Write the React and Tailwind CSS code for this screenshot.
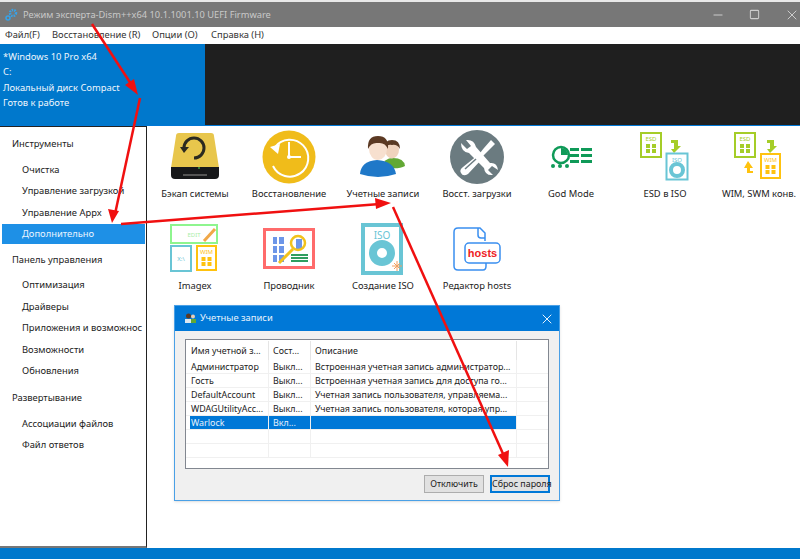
import { Minus, Square, X } from 'lucide-react';

const font = { fontFamily: '"Noto Sans", sans-serif' };

function Backup() {
  return (
    <svg width="50" height="50" viewBox="0 0 50 50">
      <path d="M6 4 Q6 1 9 1 H41 Q44 1 44 4 L49 36 H1 Z" fill="#e8c64c" />
      <path d="M1 35 H49 V43 Q49 47 45 47 H5 Q1 47 1 43 Z" fill="#17181a" />
      <rect x="13" y="42" width="24" height="2" fill="#555" />
      <circle cx="29" cy="36" r="1" fill="#3fa142" />
      <path d="M14 16 A10 10 0 1 1 24 26" fill="none" stroke="#2b2a20" strokeWidth="3" />
      <path d="M10 15 L19 15 L14 21 Z" fill="#2b2a20" />
    </svg>
  );
}

function Restore() {
  return (
    <svg width="54" height="54" viewBox="0 0 54 54">
      <circle cx="27" cy="27" r="26.5" fill="#f0bc1a" />
      <path d="M13 17 A18.5 18.5 0 1 1 11 36" fill="none" stroke="#fff" strokeWidth="2" />
      <path d="M8 17 L18 14 L16 24 Z" fill="#fff" />
      <path d="M27 12 V27 H39" fill="none" stroke="#fff" strokeWidth="2" />
      <circle cx="27" cy="27" r="2" fill="#fff" />
    </svg>
  );
}

function Users() {
  return (
    <svg width="46" height="42" viewBox="0 0 46 42">
      <path d="M22 31 Q24 22 33 22 Q44 22 45 30 Q38 34 22 31 Z" fill="#62a834" />
      <ellipse cx="32" cy="14" rx="7" ry="8.5" fill="#f0d3bd" />
      <path d="M24 13 Q24 4 32 4 Q40 4 40 13 Q37 8 32 9 Q27 8 24 13 Z" fill="#5a3a24" />
      <path d="M0 38 Q1 25 17 24 Q34 25 36 38 Q18 44 0 38 Z" fill="#1f78c8" />
      <ellipse cx="18" cy="13" rx="9" ry="11" fill="#f7e0cf" />
      <path d="M8 13 Q7 0 18 0 Q29 0 28 13 Q25 6 18 7 Q11 6 8 13 Z" fill="#5b3923" />
    </svg>
  );
}

function Tools() {
  return (
    <svg width="54" height="54" viewBox="0 0 54 54">
      <circle cx="27" cy="27" r="27" fill="#6b7b80" />
      <path d="M11 13 L17 19 L21 16 L16 10 Q24 9 26 17 L40 33 Q47 32 48 40 L42 36 L38 40 L43 45 Q35 46 34 38 L19 23 Q11 22 11 13 Z" fill="#fff" />
      <path d="M41 10 L45 14 L37 22 L33 26 L30 23 L34 18 Z" fill="#fff" />
      <path d="M28 25 L32 29 L18 44 Q13 47 11 43 Q9 40 13 37 Z" fill="#fff" />
      <path d="M15 39 L26 29" stroke="#6b7b80" strokeWidth="1.5" />
    </svg>
  );
}

function GodMode() {
  return (
    <svg width="44" height="24" viewBox="0 0 44 24">
      <circle cx="12" cy="10" r="8" fill="none" stroke="#0f9a58" strokeWidth="2.5" />
      <path d="M12 3 A7 7 0 0 1 19 10 H12 Z" fill="#0f9a58" />
      <g fill="#0f9a58">
        <rect x="21" y="3" width="9" height="3" /><rect x="32" y="3" width="11" height="3" />
        <rect x="21" y="9" width="9" height="3" /><rect x="32" y="9" width="11" height="3" />
        <rect x="21" y="15" width="9" height="3" /><rect x="32" y="15" width="11" height="3" />
        <circle cx="4" cy="21" r="2" /><circle cx="11" cy="21" r="2" /><circle cx="18" cy="21" r="2" />
      </g>
    </svg>
  );
}

function Doc({ x, y, w, h, color, label }) {
  return (
    <g>
      <rect x={x + 1} y={y + 1} width={w - 2} height={h - 2} fill="#fff" stroke={color} strokeWidth="2" />
      <text x={x + w / 2} y={y + 9} fontSize="6" textAnchor="middle" fill={color}>{label}</text>
      <g fill={color}>
        <rect x={x + w / 2 - 5} y={y + 12} width="4" height="4" /><rect x={x + w / 2 + 1} y={y + 12} width="4" height="4" />
        <rect x={x + w / 2 - 5} y={y + 17} width="4" height="4" /><rect x={x + w / 2 + 1} y={y + 17} width="4" height="4" />
      </g>
    </g>
  );
}

function EsdIso() {
  return (
    <svg width="50" height="50" viewBox="0 0 50 50">
      <Doc x={0} y={0} w={22} h={26} color="#a5cd28" label="ESD" />
      <path d="M31 8 H38 V14 H41 L34 21 L31 17 H34 V11 H31 Z" fill="#a5cd28" />
      <rect x="26.5" y="21.5" width="21" height="26" fill="#fff" stroke="#69c5d5" strokeWidth="2" />
      <text x="37" y="30" fontSize="6" textAnchor="middle" fill="#69c5d5">ISO</text>
      <circle cx="37" cy="38" r="6" fill="none" stroke="#69c5d5" strokeWidth="4" />
    </svg>
  );
}

function WimSwm() {
  return (
    <svg width="50" height="50" viewBox="0 0 50 50">
      <Doc x={0} y={0} w={22} h={26} color="#a5cd28" label="ESD" />
      <path d="M33 8 H40 V14 H43 L36 21 L33 17 H36 V11 H33 Z" fill="#a5cd28" />
      <path d="M13 36 L10 36 L14 29 L19 36 L16 36 V39 H19 V41 H13 Z" fill="#ffc20e" />
      <Doc x={26} y={21} w={21} h={26} color="#ffc20e" label="WIM" />
    </svg>
  );
}

function Imagex() {
  return (
    <svg width="50" height="50" viewBox="0 0 50 50">
      <rect x="1" y="1" width="46" height="18" fill="#fff" stroke="#8ef58e" strokeWidth="2" />
      <text x="24" y="13" fontSize="6" textAnchor="middle" fill="#a8eea8">EDIT</text>
      <path d="M34 17 L45 5" stroke="#f0a848" strokeWidth="3" />
      <rect x="1" y="22" width="20" height="25" fill="#fff" stroke="#69c5d5" strokeWidth="2" />
      <text x="11" y="37" fontSize="6" textAnchor="middle" fill="#69c5d5">X:\</text>
      <Doc x={26} y={21} w={21} h={26} color="#ffc20e" label="WIM" />
    </svg>
  );
}

function Explorer() {
  return (
    <svg width="52" height="42" viewBox="0 0 52 42">
      <rect x="1.5" y="1.5" width="49" height="38" fill="#fff" stroke="#ff6b6b" strokeWidth="3" />
      <g fill="#6d96e8">
        <rect x="10" y="9" width="4" height="7" /><rect x="16" y="9" width="5" height="7" />
        <rect x="10" y="18" width="4" height="7" /><rect x="16" y="18" width="5" height="7" />
        <rect x="10" y="27" width="4" height="7" /><rect x="16" y="27" width="5" height="7" />
        <rect x="33" y="11" width="6" height="10" />
      </g>
      <circle cx="35" cy="15" r="7" fill="none" stroke="#f2c21b" strokeWidth="2.5" />
      <path d="M30 21 L16 35" stroke="#f2c21b" strokeWidth="3" />
      <g fill="#2f9e5f">
        <rect x="28" y="26" width="17" height="2" /><rect x="28" y="29" width="17" height="2" /><rect x="28" y="32" width="17" height="2" />
      </g>
    </svg>
  );
}

function CreateIso() {
  return (
    <svg width="44" height="52" viewBox="0 0 44 52">
      <rect x="2" y="2" width="38" height="48" fill="#fff" stroke="#69c5d5" strokeWidth="4" />
      <text x="21" y="16" fontSize="10" textAnchor="middle" fill="#69c5d5">ISO</text>
      <circle cx="21" cy="30" r="9" fill="none" stroke="#69c5d5" strokeWidth="8" />
      <path d="M33 40 L39 46 M39 40 L33 46 M36 38 V48 M31 43 H41" stroke="#f0a060" strokeWidth="1" />
    </svg>
  );
}

function Hosts() {
  return (
    <svg width="48" height="44" viewBox="0 0 48 44">
      <path d="M32 14 V6 L27 1 H5 Q1 1 1 5 V39 Q1 43 5 43 H30 Q33 43 33 39 V36" fill="#fff" stroke="#3a8ff0" strokeWidth="1.5" />
      <path d="M25 1 V8 Q25 11 28 11 H32" fill="none" stroke="#3a8ff0" strokeWidth="1.5" />
      <rect x="12" y="16" width="35" height="20" rx="4" fill="#fff" stroke="#3a8ff0" strokeWidth="1.5" />
      <text x="29.5" y="30" fontSize="11" fontWeight="700" textAnchor="middle" fill="#ee1c25" fontFamily="Liberation Sans">hosts</text>
    </svg>
  );
}

const tools = [
  ['Бэкап системы', Backup],
  ['Восстановление', Restore],
  ['Учетные записи', Users],
  ['Восст. загрузки', Tools],
  ['God Mode', GodMode],
  ['ESD в ISO', EsdIso],
  ['WIM, SWM конв.', WimSwm],
  ['Imagex', Imagex],
  ['Проводник', Explorer],
  ['Создание ISO', CreateIso],
  ['Редактор hosts', Hosts],
];

const groups = [
  { title: 'Инструменты', items: ['Очистка', 'Управление загрузкой', 'Управление Appx', 'Дополнительно'] },
  { title: 'Панель управления', items: ['Оптимизация', 'Драйверы', 'Приложения и возможнос', 'Возможности', 'Обновления'] },
  { title: 'Развертывание', items: ['Ассоциации файлов', 'Файл ответов'] },
];

const accounts = [
  ['Администратор', 'Выкл...', 'Встроенная учетная запись администратор...'],
  ['Гость', 'Выкл...', 'Встроенная учетная запись для доступа го...'],
  ['DefaultAccount', 'Выкл...', 'Учетная запись пользователя, управляема...'],
  ['WDAGUtilityAcc...', 'Выкл...', 'Учетная запись пользователя, которая упр...'],
  ['Warlock', 'Вкл...', ''],
  ['', '', ''],
  ['', '', ''],
];

function Sidebar() {
  return (
    <aside className="w-[147px] shrink-0 border-t border-r border-[#222] border-b-2 border-b-[#777] pt-[7px] text-[9.4px] text-[#222] overflow-hidden">
      {groups.map((g) => (
        <div key={g.title} className="mb-[6px]">
          <div className="h-[21px] pl-3 flex items-center mb-[4px]">{g.title}</div>
          {g.items.map((item) => (
            <div
              key={item}
              className={item === 'Дополнительно'
                ? 'ml-[2px] mr-px h-[20px] pl-5 pt-px flex items-center bg-[#1e90e6] text-[#e8f4ff]'
                : 'h-[21.5px] pl-[22px] flex items-center whitespace-nowrap'}
            >
              {item}
            </div>
          ))}
        </div>
      ))}
    </aside>
  );
}

function AccountsDialog() {
  return (
    <div className="absolute left-[174px] top-[305px] w-[386px] h-[196px] bg-[#f0f0f0] border border-[#4aa0e6] flex flex-col text-[8.9px] text-[#222] shadow-sm">
      <div className="h-[25px] bg-[#0078d7] flex items-center pl-[10px] pr-[4px] text-[9.4px] text-[#e6f2fc]">
        <svg width="11" height="11" viewBox="0 0 11 11" className="mr-[4px]">
          <circle cx="3.5" cy="3" r="2.5" fill="#5b3923" />
          <circle cx="8" cy="3.5" r="2" fill="#e7cfb8" />
          <rect x="0" y="6" width="7" height="4" fill="#dce8f0" />
          <rect x="6" y="6" width="5" height="4" fill="#62a834" />
        </svg>
        <span className="flex-1">Учетные записи</span>
        <X size={16} strokeWidth={1.5} className="text-[#e6f2fc]" />
      </div>
      <div className="mx-[10px] mt-[8px] h-[130px] bg-white border border-[#828790]">
        <div className="grid grid-cols-[79px_42px_206px_1fr] h-[20px] pl-[4px] pt-px">
          <div className="pl-[1px] flex items-center border-r border-[#e5e5e5]">Имя учетной з...</div>
          <div className="pl-[4px] flex items-center border-r border-[#e5e5e5]">Сост...</div>
          <div className="pl-[4px] flex items-center border-r border-[#e5e5e5]">Описание</div>
          <div />
        </div>
        {accounts.map((row, i) => (
          <div key={i} className="grid grid-cols-[79px_42px_206px_1fr] h-[14px] pl-[4px] border-b border-[#f0f0f0] leading-[13px]">
            {row.map((cell, j) => (
              <div
                key={j}
                className={
                  (j === 0 ? 'pl-[1px] ' : 'pl-[4px] ') +
                  'whitespace-nowrap overflow-hidden border-r border-[#f0f0f0] ' +
                  (row[0] === 'Warlock' ? 'bg-[#0078d7] text-[#e6f2fc]' : '')
                }
              >
                {cell}
              </div>
            ))}
            <div />
          </div>
        ))}
      </div>
      <div className="flex justify-end gap-[6px] mt-[6px] mr-[9px]">
        <button className="w-[60px] h-[18px] bg-[#e1e1e1] border border-[#adadad]">Отключить</button>
        <button className="w-[60px] h-[18px] bg-[#e1e1e1] border-2 border-[#0078d7] whitespace-nowrap">Сброс пароля</button>
      </div>
    </div>
  );
}

function Arrows() {
  const arrows = [
    'M92 24 L133 87',
    'M140 98 L115 214',
    'M121 224 L380 204',
    'M393 207 L504 456',
  ];
  return (
    <svg width="800" height="559" className="absolute left-0 top-0 pointer-events-none">
      {arrows.map((d) => <path key={d} d={d} stroke="#f01010" strokeWidth="2.5" fill="none" />)}
      <path d="M138 95 L125 85 L134 79 Z" fill="#f01010" />
      <path d="M112 223 L108 209 L119 211 Z" fill="#f01010" />
      <path d="M391 203 L375 198 L376 209 Z" fill="#f01010" />
      <path d="M508 467 L498 455 L509 450 Z" fill="#f01010" />
    </svg>
  );
}

export default function App() {
  return (
    <div className="relative w-[800px] h-[559px] overflow-hidden bg-white flex flex-col" style={font}>
      <div className="h-[2px] bg-[#e8e8e8]" />
      <div className="h-[25px] bg-[#777] flex items-center text-[9.3px] text-[#c9c9c9]">
        <svg width="14" height="14" viewBox="0 0 14 14" className="ml-[4px] mr-[5px]">
          <circle cx="9" cy="5" r="3" fill="none" stroke="#38a3e8" strokeWidth="2.5" strokeDasharray="1.5 1" />
          <circle cx="4" cy="10" r="2" fill="none" stroke="#38a3e8" strokeWidth="1.5" />
        </svg>
        <span className="flex-1">Режим эксперта-Dism++x64 10.1.1001.10 UEFI Firmware</span>
        <Minus size={14} strokeWidth={1.7} className="mr-[24px] text-[#ccc]" />
        <Square size={11} strokeWidth={2.2} className="mr-[24px] text-[#ccc]" />
        <X size={16} strokeWidth={1.5} className="text-[#ccc]" />
      </div>
      <div className="h-[17px] flex items-center text-[9.4px] text-[#333] pl-[5px]">
        <span className="w-[47px]">Файл(F)</span>
        <span className="w-[100px]">Восстановление (R)</span>
        <span className="w-[59px]">Опции (O)</span>
        <span>Справка (H)</span>
      </div>
      <div className="h-[81px] flex bg-[#1f1f1f]">
        <div className="w-[205px] bg-[#0078cc] pl-[3px] pt-[4.5px] text-[9.4px] leading-[15.6px] text-[#eef6fc]">
          <div>*Windows 10 Pro x64</div>
          <div>C:</div>
          <div>Локальный диск Compact</div>
          <div>Готов к работе</div>
        </div>
      </div>
      <div className="h-px bg-[#0078d7]" />
      <div className="flex-1 flex min-h-0">
        <Sidebar />
        <main className="flex-1 pt-[4px] pl-px">
          <div className="grid grid-cols-[repeat(7,94px)] auto-rows-[92px] text-[9.4px] text-[#222]">
            {tools.map(([label, Icon]) => (
              <div key={label} className="flex flex-col items-center">
                <div className="h-[54px] flex items-center justify-center">
                  <Icon />
                </div>
                <div className="mt-[3px] whitespace-nowrap">{label}</div>
              </div>
            ))}
          </div>
        </main>
      </div>
      <div className="h-[11px] bg-[#0078cc]" />
      <AccountsDialog />
      <Arrows />
    </div>
  );
}
